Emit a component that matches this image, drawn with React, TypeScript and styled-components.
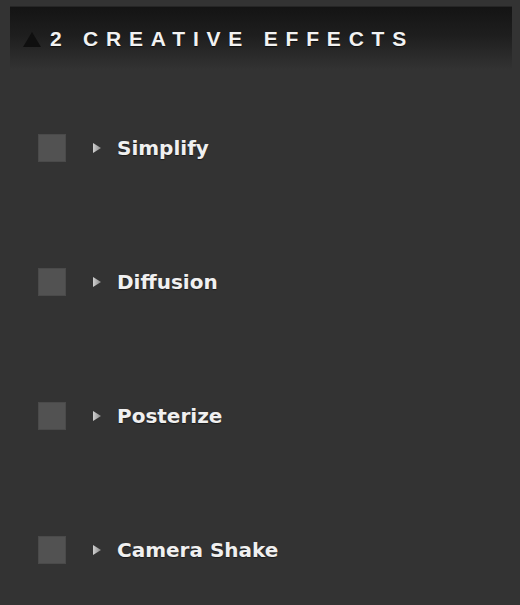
import React from 'react'
import styled, { createGlobalStyle } from 'styled-components'

const GlobalStyle = createGlobalStyle`
  html, body {
    margin: 0;
    padding: 0;
    background: #333333;
  }
`

const Panel = styled.div`
  width: 520px;
  height: 605px;
  background: #333333;
  overflow: hidden;
  font-family: 'DejaVu Sans', 'Liberation Sans', sans-serif;
`

const Header = styled.div`
  margin: 6px 8px 0 10px;
  height: 64px;
  display: flex;
  align-items: center;
  border-top: 1px solid #262626;
  background: linear-gradient(to bottom, #141414 0%, #1e1e1e 45%, #333333 100%);
  box-sizing: border-box;
`

const Collapse = styled.svg`
  width: 18px;
  height: 15px;
  margin-left: 13px;
  margin-right: 9px;
  margin-top: 1px;
  flex: none;
`

const Title = styled.div`
  font-family: 'Liberation Sans', Arial, sans-serif;
  font-weight: bold;
  font-size: 21px;
  letter-spacing: 7.8px;
  color: #f2f2f2;
  text-shadow: 0 1px 1px rgba(0, 0, 0, 0.6);
  line-height: 1;
`

const List = styled.div`
  display: flex;
  flex-direction: column;
  padding: 11px 0 0 38px;
`

const Row = styled.div`
  height: 134px;
  display: flex;
  align-items: center;
`

const Check = styled.div`
  width: 28px;
  height: 28px;
  box-sizing: border-box;
  background: #525252;
  border: 1px solid #4a4a4a;
  flex: none;
`

const Expand = styled.svg`
  width: 8px;
  height: 10px;
  margin-left: 27px;
  margin-right: 16px;
  flex: none;
`

const Label = styled.span`
  font-weight: bold;
  font-size: 20px;
  color: #f0f0f0;
  text-shadow: 0 1px 1px rgba(0, 0, 0, 0.5);
  line-height: 1;
`

const effects = ['Simplify', 'Diffusion', 'Posterize', 'Camera Shake']

export default function App() {
  return (
    <Panel>
      <GlobalStyle />
      <Header>
        <Collapse viewBox="0 0 18 15">
          <polygon points="9,0 18,15 0,15" fill="#0f0f0f" />
        </Collapse>
        <Title>2 CREATIVE EFFECTS</Title>
      </Header>
      <List>
        {effects.map((name, i) => (
          <Row key={name}>
            <Check />
            <Expand viewBox="0 0 8 10">
              <defs>
                <linearGradient id={`expand-grad-${i}`} x1="0" y1="0" x2="1" y2="0">
                  <stop offset="0" stopColor="#d0d0d0" />
                  <stop offset="1" stopColor="#8a8a8a" />
                </linearGradient>
              </defs>
              <polygon points="0,0 8,5 0,10" fill={`url(#expand-grad-${i})`} />
            </Expand>
            <Label>{name}</Label>
          </Row>
        ))}
      </List>
    </Panel>
  )
}
